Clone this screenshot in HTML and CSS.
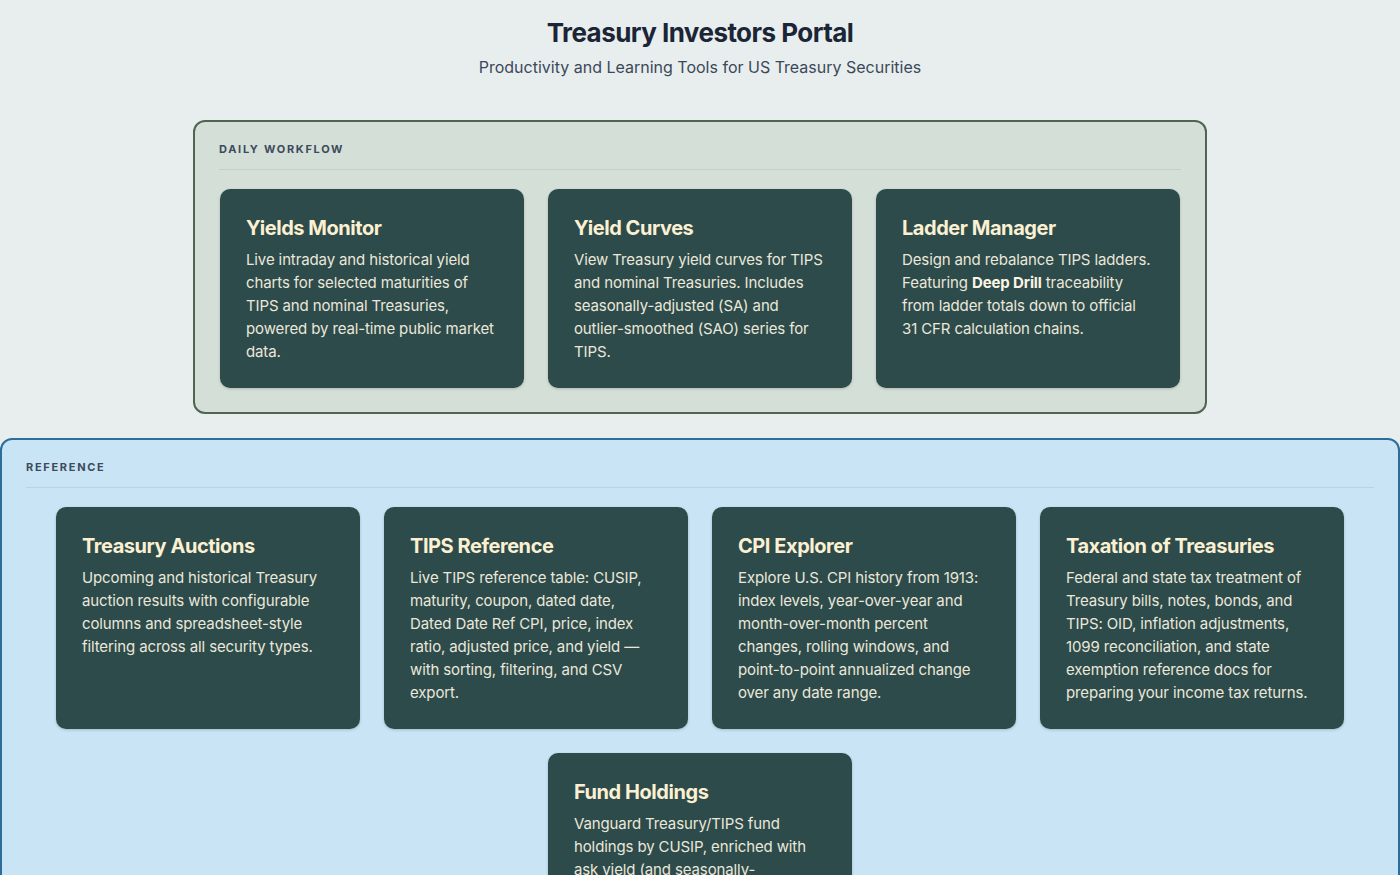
FILE: index.html
```html
<!DOCTYPE html>
<html lang="en">

<head>
    <meta charset="UTF-8">
    <meta name="viewport" content="width=device-width, initial-scale=1.0">
    <title>Treasury Investors Portal</title>
    <link rel="stylesheet" href="styles.css">
</head>

<body>
<div class="header">
    <h1>Treasury Investors Portal</h1>
    <p>Productivity and Learning Tools for US Treasury Securities</p>
</div>

<div class="section workflow">
    <h2 class="section-title">Daily Workflow</h2>
    <div class="cards">
        <a class="card" href="#">
            <h3>Yields Monitor</h3>
            <p>Live intraday and historical yield charts for selected maturities of TIPS and nominal Treasuries, powered by real-time public market data.</p>
        </a>
        <a class="card" href="#">
            <h3>Yield Curves</h3>
            <p>View Treasury yield curves for TIPS and nominal Treasuries. Includes seasonally-adjusted (SA) and outlier-smoothed (SAO) series for TIPS.</p>
        </a>
        <a class="card" href="#">
            <h3>Ladder Manager</h3>
            <p>Design and rebalance TIPS ladders. Featuring <strong>Deep Drill</strong> traceability from ladder totals down to official 31 CFR calculation chains.</p>
        </a>
    </div>
</div>

<div class="section reference">
    <h2 class="section-title">Reference</h2>
    <div class="cards">
        <a class="card" href="#">
            <h3>Treasury Auctions</h3>
            <p>Upcoming and historical Treasury auction results with configurable columns and spreadsheet-style filtering across all security types.</p>
        </a>
        <a class="card" href="#">
            <h3>TIPS Reference</h3>
            <p>Live TIPS reference table: CUSIP, maturity, coupon, dated date, <span class="nowrap">Dated Date</span> Ref CPI, price, index ratio, adjusted price, and yield — with sorting, filtering, and CSV export.</p>
        </a>
        <a class="card" href="#">
            <h3>CPI Explorer</h3>
            <p>Explore U.S. CPI history from 1913: index levels, year-over-year and month-over-month percent changes, rolling windows, and point-to-point annualized change over any date range.</p>
        </a>
        <a class="card" href="#">
            <h3>Taxation of Treasuries</h3>
            <p>Federal and state tax treatment of Treasury bills, notes, bonds, and TIPS: OID, inflation adjustments, 1099 reconciliation, and state exemption reference docs for preparing your income tax returns.</p>
        </a>
        <a class="card" href="#">
            <h3>Fund Holdings</h3>
            <p>Vanguard Treasury/TIPS fund holdings by CUSIP, enriched with ask yield (and seasonally-<br>adjusted yield for TIPS) from the latest market data.</p>
        </a>
    </div>
</div>
</body>

</html>
```

FILE: styles.css
```css
* {
    margin: 0;
    padding: 0;
    box-sizing: border-box;
}

body {
    background: #e8eeee;
    font-family: Inter, "Noto Sans", "Liberation Sans", sans-serif;
    color: #1a2433;
}

.header {
    padding-top: 16px;
    margin-bottom: 41px;
    text-align: center;
}

.header h1 {
    font-size: 26px;
    line-height: 34px;
    font-weight: 700;
    letter-spacing: -0.55px;
    color: #1b2536;
}

.header p {
    margin-top: 5px;
    font-size: 16px;
    line-height: 24px;
    color: #3b4859;
}

.section {
    border: 2px solid;
    border-radius: 12px;
    padding: 20px 24px 24px;
}

.workflow {
    width: 1014px;
    margin: 0 auto 24px;
    background: #d4dfd7;
    border-color: #4f6551;
}

.reference {
    background: #c8e4f5;
    border-color: #2c6d9c;
    padding-bottom: 40px;
}

.section-title {
    font-size: 11px;
    line-height: 14px;
    font-weight: 700;
    letter-spacing: 1.7px;
    text-transform: uppercase;
    color: #3d4a5c;
    padding-bottom: 13px;
    border-bottom: 1px solid rgba(0, 0, 0, 0.07);
    margin-bottom: 19px;
}

.cards {
    display: flex;
    flex-wrap: wrap;
    justify-content: center;
    gap: 24px;
}

.card {
    width: 304px;
    display: block;
    padding: 25px 26px 25px;
    background: #2d4b4b;
    border-radius: 10px;
    box-shadow: 0 1px 3px rgba(0, 0, 0, 0.18);
    text-decoration: none;
}

.card h3 {
    font-size: 20px;
    line-height: 28px;
    font-weight: 700;
    letter-spacing: -0.45px;
    color: #fcf0d2;
    margin-bottom: 6px;
}

.card p {
    font-size: 15px;
    line-height: 23px;
    letter-spacing: -0.12px;
    color: #ebe7da;
}

.card strong {
    color: #fcf5e4;
}

.nowrap {
    white-space: nowrap;
}
```
